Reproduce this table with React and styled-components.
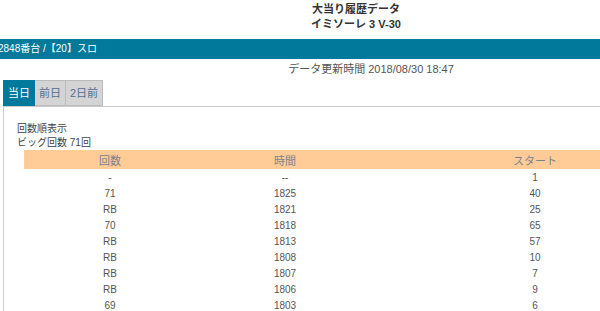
import React from 'react';
import styled, { createGlobalStyle } from 'styled-components';

const GlobalStyle = createGlobalStyle`
	body {
		margin: 0;
		background: #fff;
		font-family: "Liberation Sans", "Noto Sans CJK JP", sans-serif;
		overflow: hidden;
	}
`;

const Page = styled.div`
	width: 720px;
	color: #555;
`;

const Title = styled.h1`
	margin: 0;
	padding: 2px 8px 0 0;
	text-align: center;
	font-size: 11px;
	line-height: 15px;
	font-weight: bold;
	color: #333;
`;

const Bar = styled.div`
	margin-top: 7px;
	height: 20px;
	line-height: 20px;
	background-color: #00799a;
	color: #fff;
	font-size: 10px;
	text-indent: -2px;
	white-space: nowrap;
`;

const UpdateTime = styled.p`
	margin: 3px 0 0;
	padding-left: 22px;
	text-align: center;
	font-size: 11px;
	line-height: 14px;
	color: #555;
`;

const Tabs = styled.div`
	margin: 4px 0 0 3px;
	display: flex;
`;

const Tab = styled.div`
	height: 26px;
	line-height: 24px;
	padding: 0 4px;
	font-size: 11px;
	box-sizing: border-box;
	border: 1px solid ${(props) => props.active ? '#00799a' : '#bbb'};
	border-left-width: ${(props) => props.first ? '1px' : '0'};
	background-color: ${(props) => props.active ? '#00799a' : '#d4d4d4'};
	color: ${(props) => props.active ? '#fff' : '#52708f'};
`;

const Panel = styled.div`
	margin-left: 3px;
	border-top: 1px solid #ccc;
	border-left: 1px solid #ccc;
	padding: 15px 0 0 13px;
	height: 300px;
`;

const Label = styled.p`
	margin: 0;
	font-size: 10px;
	line-height: 14px;
	color: #444;
`;

const Table = styled.table`
	margin: 0 0 0 7px;
	border-collapse: collapse;
	font-size: 10px;
	color: #555;
`;

const HeadCell = styled.th`
	width: ${(props) => props.width};
	height: 19px;
	padding: 0;
	background-color: #ffcb96;
	font-weight: normal;
	font-size: 11px;
	color: #7a8290;
	text-align: center;
`;

const Cell = styled.td`
	height: 16px;
	padding: 0;
	text-align: center;
`;

const rows = [
	['-', '--', '1'],
	['71', '1825', '40'],
	['RB', '1821', '25'],
	['70', '1818', '65'],
	['RB', '1813', '57'],
	['RB', '1808', '10'],
	['RB', '1807', '7'],
	['RB', '1806', '9'],
	['69', '1803', '6'],
	['RB', '1801', '12'],
];

export default function App() {
	return (
		<Page>
			<GlobalStyle />
			<Title>
				大当り履歴データ<br />
				イミソーレ 3 V-30
			</Title>
			<Bar>2848番台 /【20】スロ</Bar>
			<UpdateTime>データ更新時間 2018/08/30 18:47</UpdateTime>
			<Tabs>
				<Tab active first>当日</Tab>
				<Tab>前日</Tab>
				<Tab>2日前</Tab>
			</Tabs>
			<Panel>
				<Label>回数順表示</Label>
				<Label>ビッグ回数 71回</Label>
				<Table>
					<thead>
						<tr>
							<HeadCell width="172px">回数</HeadCell>
							<HeadCell width="178px">時間</HeadCell>
							<HeadCell width="322px">スタート</HeadCell>
						</tr>
					</thead>
					<tbody>
						{rows.map((row, i) => (
							<tr key={i}>
								{row.map((value, j) => (
									<Cell key={j}>{value}</Cell>
								))}
							</tr>
						))}
					</tbody>
				</Table>
			</Panel>
		</Page>
	);
}
